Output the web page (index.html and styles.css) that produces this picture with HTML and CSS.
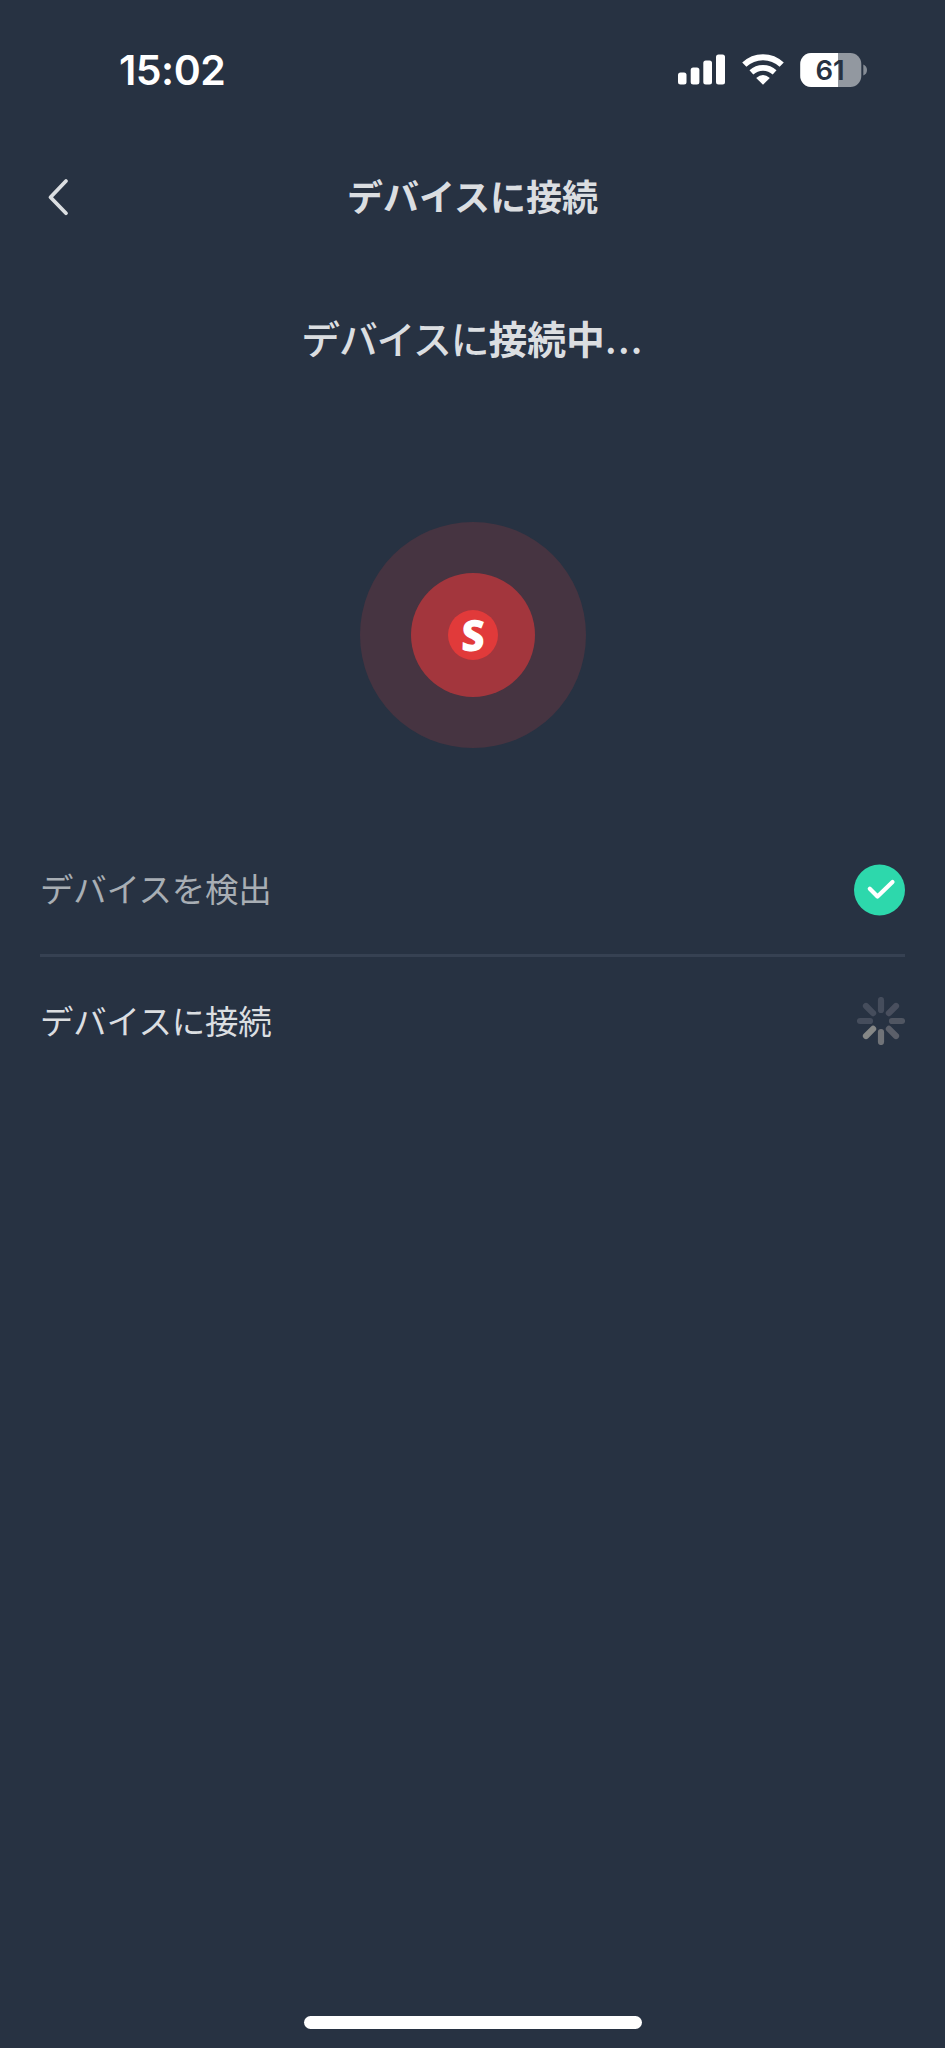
FILE: index.html
```html
<!DOCTYPE html>
<html lang="ja">
<head>
<meta charset="utf-8">
<title>デバイスに接続</title>
<link rel="stylesheet" href="styles.css">
</head>
<body>
<div class="screen">
  <div class="status">
    <span class="time">15:02</span>
    <svg class="status-icons" width="192" height="36" viewBox="0 0 192 36">
      <g fill="#fff">
        <rect x="0" y="20.500" width="8.500" height="12" rx="2.500"/>
        <rect x="12.700" y="15.500" width="8.700" height="17" rx="2.500"/>
        <rect x="25.300" y="8.500" width="8.700" height="24" rx="2.500"/>
        <rect x="38" y="2.500" width="9" height="30" rx="2.500"/>
        <path d="M85 32.800L78.200 26Q85 20.200 91.800 26Z"/>
      </g>
      <path d="M66.300 12.700A27 27 0 0 1 103.700 12.700" fill="none" stroke="#fff" stroke-width="6"/>
      <path d="M73.400 20.400A17 17 0 0 1 96.600 20.400" fill="none" stroke="#fff" stroke-width="5.600"/>
      <clipPath id="cell"><rect x="122.300" y="1" width="61" height="34" rx="11"/></clipPath>
      <g clip-path="url(#cell)">
        <path d="M122 1h62v34h-62z" fill="#9298a0"/>
        <path d="M122 1h38v34h-38z" fill="#fff"/>
      </g>
      <path d="M185.300 12.500q3.700 1.500 3.700 5.500t-3.700 5.500z" fill="#858c95"/>
      <text class="charge" x="152" y="27.700" text-anchor="middle">61</text>
    </svg>
  </div>
  <header class="nav">
    <svg class="back" width="26" height="42" viewBox="0 0 26 42"><path d="M20 5L4.500 21.200L20 37.200" fill="none" stroke="#dbdee1" stroke-width="3.800" stroke-linecap="round" stroke-linejoin="round"/></svg>
    <h1 class="title">デバイスに接続</h1>
  </header>
  <h2 class="heading"><span class="heading-kana">デバイスに</span><span>接続中</span><span class="dots">...</span></h2>
  <div class="pulse"><div class="ring"><div class="core"><span class="logo">S</span></div></div></div>
  <ul class="steps">
    <li class="step done">
      <span class="label">デバイスを検出</span>
      <svg width="52" height="52" viewBox="0 0 52 52"><circle cx="26.500" cy="26" r="25.500" fill="#2dd8ac"/><path d="M16.800 24.700L24.500 32.500L39.500 18" fill="none" stroke="#fff" stroke-width="4.200" stroke-linecap="round" stroke-linejoin="round"/></svg>
    </li>
    <li class="step">
      <span class="label">デバイスに接続</span>
      <svg width="48" height="48" viewBox="-24 -24 48 48" stroke-width="6.200" stroke-linecap="round">
        <path d="M0-11V-21" stroke="#454d5c"/>
        <path d="M7.900-7.900L15-15" stroke="#494f5e"/>
        <path d="M11 0H21" stroke="#505662"/>
        <path d="M7.900 7.900L15 15" stroke="#5b5f69"/>
        <path d="M0 11V21" stroke="#707378"/>
        <path d="M-7.900 7.900L-15 15" stroke="#858786"/>
        <path d="M-11 0H-21" stroke="#454d5c"/>
        <path d="M-7.900-7.900L-15-15" stroke="#454d5c"/>
      </svg>
    </li>
  </ul>
  <div class="home"></div>
</div>
</body>
</html>
```
FILE: styles.css
```css
* { box-sizing: border-box; }
body { margin: 0; background: #273242; }
.screen {
  width: 945px;
  height: 2048px;
  display: flex;
  flex-direction: column;
  align-items: center;
  background: #273242;
  color: #dbdee1;
  font-family: "Noto Sans CJK JP", sans-serif;
}
.status {
  width: 100%;
  height: 140px;
  padding: 0 75px 0 119px;
  display: flex;
  justify-content: space-between;
  align-items: center;
}
.time {
  font: 600 41px/50px Inter, sans-serif;
  letter-spacing: -0.5px;
  color: #fff;
}
.charge {
  font: 600 27.5px Inter, sans-serif;
  fill: #273242;
}
.nav {
  width: 100%;
  height: 114px;
  display: grid;
  grid-template-columns: 80px 1fr 80px;
  align-items: center;
}
.back { margin-left: 45.5px; }
.title {
  margin: 0;
  padding-bottom: 4px;
  text-align: center;
  font-size: 36px;
  line-height: 52px;
  font-weight: 700;
  white-space: nowrap;
}
.heading {
  margin: 54px 0 0;
  height: 58px;
  display: flex;
  font-size: 38.8px;
  line-height: 58px;
  font-weight: 700;
  white-space: nowrap;
}
.heading-kana {
  font-weight: 500;
  letter-spacing: -1.1px;
}
.dots {
  font-weight: 500;
  letter-spacing: 1.4px;
}
.pulse {
  width: 226px;
  height: 226px;
  margin-top: 156px;
  display: grid;
  place-items: center;
  border-radius: 50%;
  background: #463441;
}
.ring {
  width: 124px;
  height: 124px;
  display: grid;
  place-items: center;
  border-radius: 50%;
  background: #a3363d;
}
.core {
  width: 50px;
  height: 50px;
  border-radius: 50%;
  background: #e13a3a;
  color: #fff;
  text-align: center;
  font: 800 43px/50px "Open Sans", sans-serif;
}
.logo {
  display: block;
  transform: scaleX(0.95) skewX(-2deg);
}
.steps {
  width: 865px;
  margin: 77px 0 0;
  padding: 0;
  list-style: none;
}
.step {
  height: 128px;
  display: flex;
  justify-content: space-between;
  align-items: center;
  font-size: 33.5px;
  line-height: 50px;
}
.label {
  padding-bottom: 3px;
  letter-spacing: -0.3px;
}
.done {
  height: 132px;
  border-bottom: 3px solid #364152;
  color: #a8aeb4;
}
.home {
  width: 338px;
  height: 13px;
  margin-top: auto;
  margin-bottom: 19px;
  border-radius: 7px;
  background: #fff;
}
```
